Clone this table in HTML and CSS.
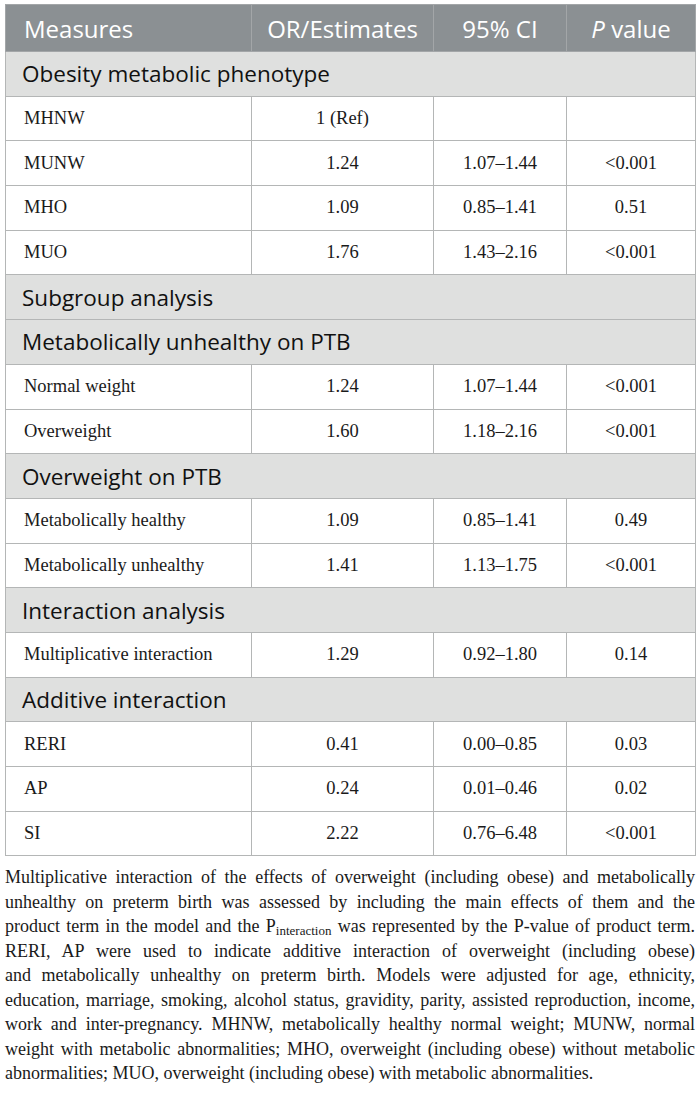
FILE: index.html
```html
<!DOCTYPE html>
<html>
<head>
<meta charset="utf-8">
<link rel="stylesheet" href="styles.css">
</head>
<body>
<div class="wrap">
<table class="tbl">
<colgroup><col class="c1"><col class="c2"><col class="c3"><col class="c4"></colgroup>
<thead>
<tr class="hd"><th class="l">Measures</th><th>OR/Estimates</th><th>95% CI</th><th><i>P</i> value</th></tr>
</thead>
<tbody>
<tr class="sec"><td colspan="4">Obesity metabolic phenotype</td></tr>
<tr><td class="l">MHNW</td><td>1 (Ref)</td><td></td><td></td></tr>
<tr><td class="l">MUNW</td><td>1.24</td><td>1.07–1.44</td><td>&lt;0.001</td></tr>
<tr><td class="l">MHO</td><td>1.09</td><td>0.85–1.41</td><td>0.51</td></tr>
<tr><td class="l">MUO</td><td>1.76</td><td>1.43–2.16</td><td>&lt;0.001</td></tr>
<tr class="sec"><td colspan="4">Subgroup analysis</td></tr>
<tr class="sec"><td colspan="4">Metabolically unhealthy on PTB</td></tr>
<tr><td class="l">Normal weight</td><td>1.24</td><td>1.07–1.44</td><td>&lt;0.001</td></tr>
<tr><td class="l">Overweight</td><td>1.60</td><td>1.18–2.16</td><td>&lt;0.001</td></tr>
<tr class="sec"><td colspan="4">Overweight on PTB</td></tr>
<tr><td class="l">Metabolically healthy</td><td>1.09</td><td>0.85–1.41</td><td>0.49</td></tr>
<tr><td class="l">Metabolically unhealthy</td><td>1.41</td><td>1.13–1.75</td><td>&lt;0.001</td></tr>
<tr class="sec"><td colspan="4">Interaction analysis</td></tr>
<tr><td class="l">Multiplicative interaction</td><td>1.29</td><td>0.92–1.80</td><td>0.14</td></tr>
<tr class="sec"><td colspan="4">Additive interaction</td></tr>
<tr><td class="l">RERI</td><td>0.41</td><td>0.00–0.85</td><td>0.03</td></tr>
<tr><td class="l">AP</td><td>0.24</td><td>0.01–0.46</td><td>0.02</td></tr>
<tr><td class="l">SI</td><td>2.22</td><td>0.76–6.48</td><td>&lt;0.001</td></tr>
</tbody>
</table>
<p class="note"><span class="ln">Multiplicative interaction of the effects of overweight (including obese) and metabolically</span>
<span class="ln">unhealthy on preterm birth was assessed by including the main effects of them and the</span>
<span class="ln">product term in the model and the P<sub>interaction</sub> was represented by the P-value of product term.</span>
<span class="ln">RERI, AP were used to indicate additive interaction of overweight (including obese)</span>
<span class="ln">and metabolically unhealthy on preterm birth. Models were adjusted for age, ethnicity,</span>
<span class="ln">education, marriage, smoking, alcohol status, gravidity, parity, assisted reproduction, income,</span>
<span class="ln">work and inter-pregnancy. MHNW, metabolically healthy normal weight; MUNW, normal</span>
<span class="ln">weight with metabolic abnormalities; MHO, overweight (including obese) without metabolic</span>
<span class="ln last">abnormalities; MUO, overweight (including obese) with metabolic abnormalities.</span></p>
</div>
</body>
</html>
```
FILE: styles.css
```css
html, body {
  margin: 0;
  padding: 0;
  background: #ffffff;
}
.wrap {
  padding: 4px 5px 0 5px;
}
.tbl {
  width: 690px;
  border-collapse: collapse;
  table-layout: fixed;
  border: 1px solid #b4b6b6;
}
.c1 { width: 246px; }
.c2 { width: 182px; }
.c3 { width: 133px; }
.c4 { width: 129px; }
.tbl th, .tbl td {
  border: 1px solid #b4b6b6;
  padding: 0;
  text-align: center;
  height: 44.7px;
  box-sizing: border-box;
}
.tbl td.l { text-align: left; padding-left: 18px; }
.hd th {
  background: #8b9093;
  color: #ffffff;
  font-family: "Open Sans", sans-serif;
  font-weight: 400;
  font-size: 24px;
  height: 47px;
  padding: 0;
  border-color: #a3a6a8;
}
.hd th.l { text-align: left; padding-left: 18px; }
.hd th i { font-style: italic; }
.sec td {
  background: #dfe0df;
  color: #111;
  font-family: "Open Sans", sans-serif;
  font-size: 22.5px;
  text-align: left;
  padding-left: 16px;
}
.tbl tbody tr:not(.sec) td {
  font-family: "Liberation Serif", "Times New Roman", serif;
  font-size: 18.5px;
  color: #1a1a1a;
}
.note {
  margin: 9px 0 0 0;
  font-family: "Liberation Serif", "Times New Roman", serif;
  font-size: 18px;
  line-height: 24.5px;
  color: #1a1a1a;
}
.ln {
  display: block;
  text-align: justify;
  text-align-last: justify;
}
.ln.last {
  text-align: left;
  text-align-last: left;
}
.note sub {
  font-size: 13px;
  vertical-align: -3px;
  line-height: 0;
}
```
